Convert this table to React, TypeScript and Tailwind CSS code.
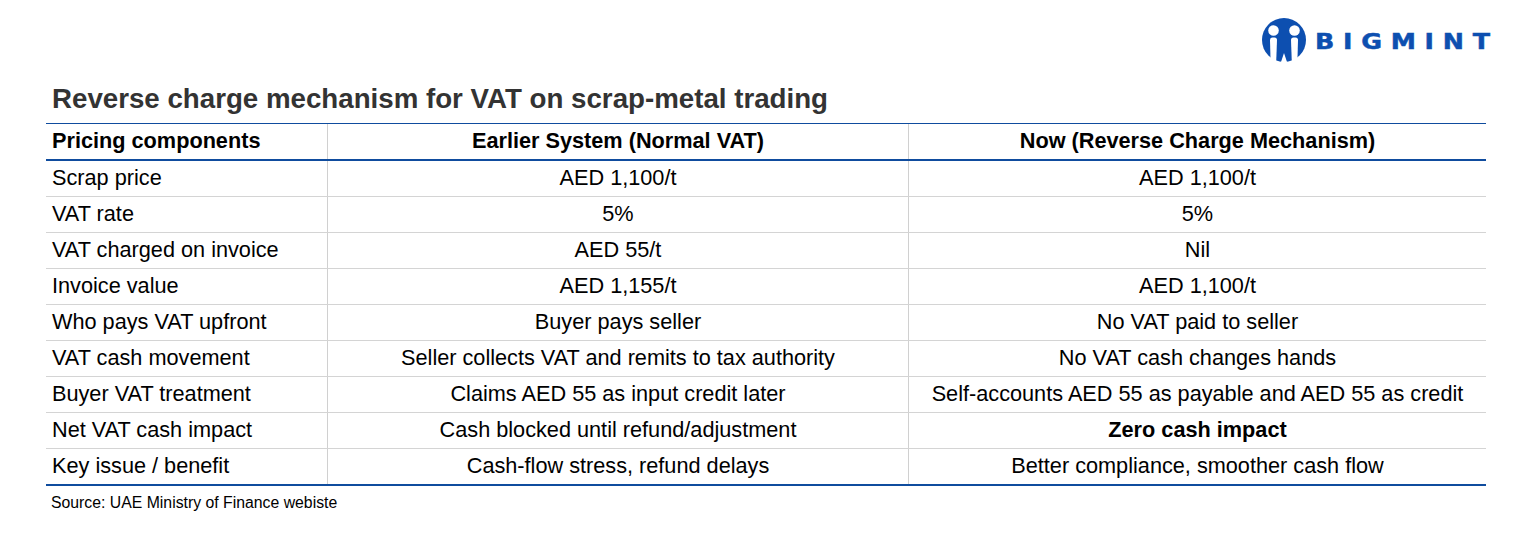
import React from "react";

const rows: [string, string, string, boolean?][] = [
  ["Scrap price", "AED 1,100/t", "AED 1,100/t"],
  ["VAT rate", "5%", "5%"],
  ["VAT charged on invoice", "AED 55/t", "Nil"],
  ["Invoice value", "AED 1,155/t", "AED 1,100/t"],
  ["Who pays VAT upfront", "Buyer pays seller", "No VAT paid to seller"],
  ["VAT cash movement", "Seller collects VAT and remits to tax authority", "No VAT cash changes hands"],
  ["Buyer VAT treatment", "Claims AED 55 as input credit later", "Self-accounts AED 55 as payable and AED 55 as credit"],
  ["Net VAT cash impact", "Cash blocked until refund/adjustment", "Zero cash impact", true],
  ["Key issue / benefit", "Cash-flow stress, refund delays", "Better compliance, smoother cash flow"],
];

function Logo() {
  return (
    <svg width="44" height="44" viewBox="0 0 44 44" aria-hidden="true">
      <circle cx="22" cy="22" r="22" fill="#0d4fb0" />
      <circle cx="11.5" cy="12.5" r="5.3" fill="#fff" />
      <circle cx="32.5" cy="12.5" r="5.3" fill="#fff" />
      <path d="M8 22 Q8 19.5 10.5 19.5 H12.5 Q15 19.5 15 22 L14.2 44 H8.6 Z" fill="#fff" />
      <path d="M29 22 Q29 19.5 31.5 19.5 H33.5 Q36 19.5 36 22 L35.4 44 H29.8 Z" fill="#fff" />
      <path d="M19 44 L22 35 L25 44 Z" fill="#fff" />
    </svg>
  );
}

export default function App() {
  return (
    <div className="w-[1539px] h-[548px] bg-white pl-[46px] pr-[53px] font-['Liberation_Sans',Arial,sans-serif] text-black">
      <div className="flex justify-end pt-[18px] h-[62px]">
        <div className="flex items-center gap-[9px] mr-[11px]">
          <Logo />
          <span className="mt-[3px] inline-block origin-left scale-x-[1.15] font-['DejaVu_Sans',sans-serif] font-bold text-[22px] leading-none tracking-[7.6px] text-[#0d4fb0] [-webkit-text-stroke:0.5px_#0d4fb0]">
            BIGMINT
          </span>
        </div>
      </div>
      <h1 className="mt-[22px] pl-[6px] text-[27.7px] leading-[30px] font-bold text-[#333333]">
        Reverse charge mechanism for VAT on scrap-metal trading
      </h1>
      <div className="mt-[9px] border-t border-[#0f4c9e] text-[21.7px]">
        <div className="grid grid-cols-[282px_581px_577px] border-b-2 border-[#0f4c9e] font-bold">
          <div className="h-[35px] flex items-center pl-[6px] border-r border-[#d0d0d0]">Pricing components</div>
          <div className="h-[35px] flex items-center justify-center border-r border-[#d0d0d0]">Earlier System (Normal VAT)</div>
          <div className="h-[35px] flex items-center justify-center">Now (Reverse Charge Mechanism)</div>
        </div>
        {rows.map(([a, b, c, bold], i) => (
          <div
            key={a}
            className={
              "grid grid-cols-[282px_581px_577px] " +
              (i === rows.length - 1 ? "border-b-2 border-[#0f4c9e]" : "border-b border-[#d4d4d4]")
            }
          >
            <div className="h-[35px] flex items-center pl-[6px] border-r border-[#d0d0d0]">{a}</div>
            <div className="h-[35px] flex items-center justify-center border-r border-[#d0d0d0]">{b}</div>
            <div className={"h-[35px] flex items-center justify-center" + (bold ? " font-bold" : "")}>{c}</div>
          </div>
        ))}
      </div>
      <div className="mt-[8px] pl-[5px] text-[15.8px] leading-[18px]">Source: UAE Ministry of Finance webiste</div>
    </div>
  );
}
